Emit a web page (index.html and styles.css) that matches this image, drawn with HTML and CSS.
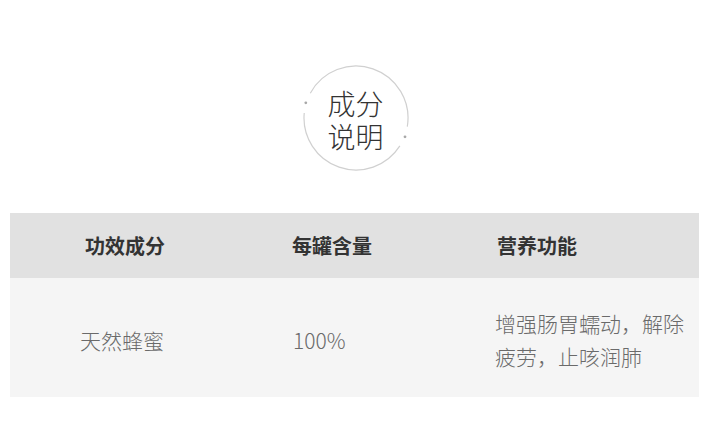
FILE: index.html
```html
<!DOCTYPE html>
<html lang="zh-CN">
<head>
<meta charset="utf-8">
<title>成分说明</title>
<link rel="stylesheet" href="styles.css">
</head>
<body>
<section class="title">
  <div class="badge">
    <svg class="ring" width="110" height="110" viewBox="0 0 110 110">
      <path d="M98.86 82.94 A52 52 0 0 1 3.24 50.02" />
      <path d="M9.30 30.19 A52 52 0 0 1 106.29 63.58" />
      <circle class="dot" cx="4.8" cy="39.8" r="1.4" />
      <circle class="dot" cx="104" cy="73.8" r="1.4" />
    </svg>
    <h1 class="badge-text"><span class="line">成分</span><span class="line">说明</span></h1>
  </div>
</section>
<div class="table">
  <div class="row head">
    <div class="cell c1">功效成分</div>
    <div class="cell c2">每罐含量</div>
    <div class="cell c3">营养功能</div>
  </div>
  <div class="row body-row">
    <div class="cell c1">天然蜂蜜</div>
    <div class="cell c2">100%</div>
    <div class="cell c3">增强肠胃蠕动，解除疲劳，止咳润肺</div>
  </div>
</div>
</body>
</html>
```
FILE: styles.css
```css
* { box-sizing: border-box; }
html, body { margin: 0; padding: 0; background: #fff; }
body {
  font-family: "Noto Sans CJK SC", "Noto Sans", sans-serif;
  color: #333;
}
.title {
  display: flex;
  justify-content: center;
  padding-top: 63px;
  padding-left: 1px;
}
.badge {
  display: grid;
  width: 110px;
  height: 110px;
}
.ring, .badge-text { grid-area: 1 / 1; }
.ring path {
  fill: none;
  stroke: #d0d0d0;
  stroke-width: 1.2;
}
.ring .dot { fill: #a8a8a8; }
.badge-text {
  margin: 0;
  align-self: center;
  justify-self: center;
  display: flex;
  flex-direction: column;
  font-size: 28px;
  font-weight: 300;
  color: #333;
  text-align: center;
  position: relative;
  top: 2px;
}
.badge-text .line {
  display: block;
  height: 33px;
  line-height: 33px;
}
.table {
  margin: 40px 11px 0 10px;
}
.row {
  display: grid;
  grid-template-columns: 282px 203px 1fr;
  align-items: center;
}
.head {
  height: 65px;
  background: #e1e1e1;
  font-weight: 700;
  font-size: 20px;
  color: #333;
}
.body-row {
  height: 119px;
  background: #f5f5f5;
  font-size: 21px;
  line-height: 33px;
  color: #6a6a6a;
  font-weight: 300;
  padding-top: 5px;
}
.head .c1 { padding-left: 75px; }
.head .c2 { padding-left: 0; }
.head .c3 { padding-left: 2px; }
.body-row .c1 { padding-left: 70px; }
.body-row .c2 { padding-left: 1px; }
.body-row .c3 { padding-left: 0; padding-right: 6px; }
```
